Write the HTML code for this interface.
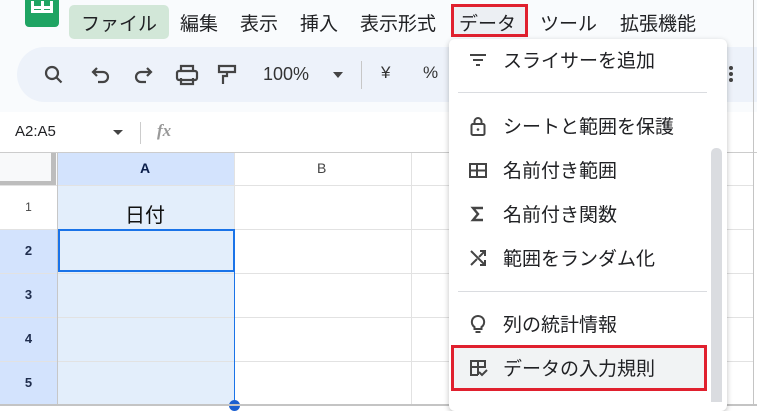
<!DOCTYPE html>
<html><head><meta charset="utf-8"><style>
*{margin:0;padding:0;box-sizing:border-box}
body{width:757px;height:410px;overflow:hidden;background:#fff;font-family:"Liberation Sans","Noto Sans CJK JP",sans-serif;position:relative}
.abs{position:absolute}
.t{position:absolute;white-space:nowrap}
.mi{position:absolute;left:449px;width:278px;height:44px}
.mi .ic{position:absolute;left:19px;top:12px;width:20px;height:20px}
.mi .tx{position:absolute;left:54px;top:8px;font-size:19px;color:#202124}
.hl{position:absolute;background:#e2e2e2}
.vl{position:absolute;background:#e2e2e2}
.rh{position:absolute;left:0;width:57px;text-align:center;font-size:13px;font-weight:bold;color:#1f2d4d}
</style></head><body>
<div class="abs" style="left:0;top:0;width:757px;height:112px;background:#f9fbfd"></div>
<div class="abs" style="left:25px;top:0;width:34px;height:27px;background:#1fa463;border-radius:0 0 4px 4px"></div>
<div class="abs" style="left:31px;top:1px;width:22px;height:12px;border:3px solid #fff;border-top:none"></div>
<div class="abs" style="left:41px;top:1px;width:3px;height:12px;background:#fff"></div>
<div class="abs" style="left:31px;top:6px;width:22px;height:3px;background:#fff"></div>
<div class="abs" style="left:69px;top:5px;width:100px;height:34px;background:#d2e7d8;border-radius:5px"></div>
<div class="t" style="left:81px;top:9px;font-size:19px;color:#202124">ファイル</div>
<div class="t" style="left:180px;top:9px;font-size:19px;color:#202124">編集</div>
<div class="t" style="left:240px;top:9px;font-size:19px;color:#202124">表示</div>
<div class="t" style="left:300px;top:9px;font-size:19px;color:#202124">挿入</div>
<div class="t" style="left:360px;top:9px;font-size:19px;color:#202124">表示形式</div>
<div class="abs" style="left:451px;top:4px;width:77px;height:33px;border:3px solid #e0202e;background:#eceff3"></div>
<div class="t" style="left:459px;top:9px;font-size:19px;color:#202124">データ</div>
<div class="t" style="left:540px;top:9px;font-size:19px;color:#202124">ツール</div>
<div class="t" style="left:620px;top:9px;font-size:19px;color:#202124">拡張機能</div>
<div class="abs" style="left:17px;top:47px;width:740px;height:55px;background:#edf2fa;border-radius:28px 0 0 28px"></div>
<svg class="abs" style="left:40px;top:62px" width="330" height="28" viewBox="0 0 330 28">
<g fill="none" stroke="#444" stroke-width="2.2">
<circle cx="12" cy="11" r="6"/><path d="M16.5 15.5l5 5"/>
<path d="M58 20h5a5 5 0 0 0 0-10h-9M57 6l-4 4 4 4"/>
<path d="M106 20h-5a5 5 0 0 1 0-10h9M107 6l4 4-4 4"/>
<rect x="137" y="9" width="20" height="9" rx="2"/><path d="M141 9V4h12v5M141 16v6h12v-6"/>
<path d="M179 4h16v6h-16zM187 10v4h-4v8"/>
</g></svg>
<div class="t" style="left:263px;top:64px;font-size:18px;color:#333">100%</div>
<div class="abs" style="left:333px;top:72px;border:5px solid transparent;border-top:6px solid #444"></div>
<div class="abs" style="left:361px;top:61px;width:1px;height:28px;background:#c7c7c7"></div>
<div class="t" style="left:381px;top:63px;font-size:17px;color:#333">¥</div>
<div class="t" style="left:423px;top:63px;font-size:17px;color:#333">%</div>
<div class="abs" style="left:729px;top:66px;width:4px;height:4px;border-radius:2px;background:#444;box-shadow:0 6px 0 #444,0 12px 0 #444"></div>
<div class="t" style="left:15px;top:123px;font-size:15px;color:#202124">A2:A5</div>
<div class="abs" style="left:113px;top:130px;border:5px solid transparent;border-top:5px solid #444"></div>
<div class="abs" style="left:140px;top:122px;width:1px;height:22px;background:#ccc"></div>
<div class="t" style="left:157px;top:121px;font-size:17px;font-style:italic;font-weight:bold;color:#999;font-family:'Liberation Serif',serif">fx</div>
<div class="hl" style="left:0;top:152px;width:757px;height:1px;background:#ccc"></div>
<div class="abs" style="left:0;top:153px;width:57px;height:32px;background:#f8f9fa"></div>
<div class="abs" style="left:51px;top:153px;width:5px;height:32px;background:#bdbdbd"></div>
<div class="abs" style="left:0;top:181px;width:56px;height:4px;background:#bdbdbd"></div>
<div class="abs" style="left:58px;top:153px;width:176px;height:32px;background:#d3e3fd"></div>
<div class="t" style="left:140px;top:160px;font-size:14px;font-weight:bold;color:#0b1e4a">A</div>
<div class="t" style="left:317px;top:160px;font-size:14px;color:#444">B</div>
<div class="abs" style="left:58px;top:185px;width:176px;height:220px;background:#e3eefb"></div>
<div class="abs" style="left:0;top:229px;width:57px;height:176px;background:#d3e3fd"></div>
<div class="hl" style="left:0;top:185px;width:754px;height:1px"></div>
<div class="hl" style="left:0;top:229px;width:754px;height:1px"></div>
<div class="hl" style="left:0;top:273px;width:754px;height:1px"></div>
<div class="hl" style="left:0;top:317px;width:754px;height:1px"></div>
<div class="hl" style="left:0;top:361px;width:754px;height:1px"></div>
<div class="vl" style="left:57px;top:153px;width:1px;height:253px;background:#c7c7c7"></div>
<div class="vl" style="left:234px;top:153px;width:1px;height:253px"></div>
<div class="vl" style="left:411px;top:153px;width:1px;height:253px"></div>
<div class="rh" style="top:200px;font-weight:normal;font-size:12px;color:#444">1</div>
<div class="rh" style="top:243px">2</div>
<div class="rh" style="top:287px">3</div>
<div class="rh" style="top:331px">4</div>
<div class="rh" style="top:375px">5</div>
<div class="t" style="left:125px;top:199px;font-size:20px;color:#111">日付</div>
<div class="abs" style="left:58px;top:229px;width:177px;height:43px;border:2px solid #1a73e8"></div>
<div class="abs" style="left:234px;top:271px;width:1px;height:134px;background:#1a73e8"></div>
<div class="abs" style="left:229px;top:400px;width:11px;height:11px;border-radius:6px;background:#1a5fd0"></div>
<div class="abs" style="left:0;top:404px;width:757px;height:2px;background:#c4c4c4"></div>
<div class="abs" style="left:753px;top:0;width:1px;height:406px;background:#c4c4c4"></div>
<div class="abs" style="left:449px;top:39px;width:278px;height:372px;background:#fff;border-radius:6px;box-shadow:0 2px 6px rgba(0,0,0,.25)"></div>
<div class="abs" style="left:458px;top:92px;width:249px;height:1px;background:#dadce0"></div>
<div class="abs" style="left:458px;top:291px;width:249px;height:1px;background:#dadce0"></div>
<div class="abs" style="left:711px;top:148px;width:11px;height:254px;background:#dadce0;border-radius:5px 5px 0 0"></div>
<div class="abs" style="left:451px;top:345px;width:256px;height:46px;background:#f1f3f4;border:3px solid #e0202e"></div>
<div class="mi" style="top:38px"><svg class="ic" viewBox="0 0 20 20"><path d="M2 5h16M5 10h10M8 15h4" stroke="#444" stroke-width="2"/></svg><div class="tx">スライサーを追加</div></div>
<div class="mi" style="top:104px"><svg class="ic" viewBox="0 0 20 20"><rect x="3.5" y="8" width="13" height="11" rx="1.5" fill="none" stroke="#444" stroke-width="2"/><path d="M6.5 8V5.5a3.5 3.5 0 0 1 7 0V8" fill="none" stroke="#444" stroke-width="2"/><circle cx="10" cy="13.5" r="1.3" fill="#444"/></svg><div class="tx">シートと範囲を保護</div></div>
<div class="mi" style="top:148px"><svg class="ic" viewBox="0 0 20 20"><rect x="2" y="4" width="16" height="13" fill="none" stroke="#444" stroke-width="2"/><path d="M2 10.5h16M9 4v13" stroke="#444" stroke-width="2"/></svg><div class="tx">名前付き範囲</div></div>
<div class="mi" style="top:192px"><svg class="ic" viewBox="0 0 20 20"><path d="M15 4H5l5 6-5 6h10" fill="none" stroke="#444" stroke-width="2.4"/></svg><div class="tx">名前付き関数</div></div>
<div class="mi" style="top:236px"><svg class="ic" viewBox="0 0 20 20"><path d="M3 3l14 14M12 3h5v5M17 3l-6 6M9 11l-6 6M12 17h5v-5" fill="none" stroke="#444" stroke-width="2"/></svg><div class="tx">範囲をランダム化</div></div>
<div class="mi" style="top:302px"><svg class="ic" viewBox="0 0 20 20"><path d="M10 2a6 6 0 0 0-3.5 11v2h7v-2A6 6 0 0 0 10 2zM7.5 18h5" fill="none" stroke="#444" stroke-width="2"/></svg><div class="tx">列の統計情報</div></div>
<div class="mi" style="top:346px"><svg class="ic" viewBox="0 0 20 20"><path d="M10 17H3V3h14v7M3 9h14M10 3v14M11 14l3 3 5-5" fill="none" stroke="#444" stroke-width="2"/></svg><div class="tx">データの入力規則</div></div>
</body></html>
